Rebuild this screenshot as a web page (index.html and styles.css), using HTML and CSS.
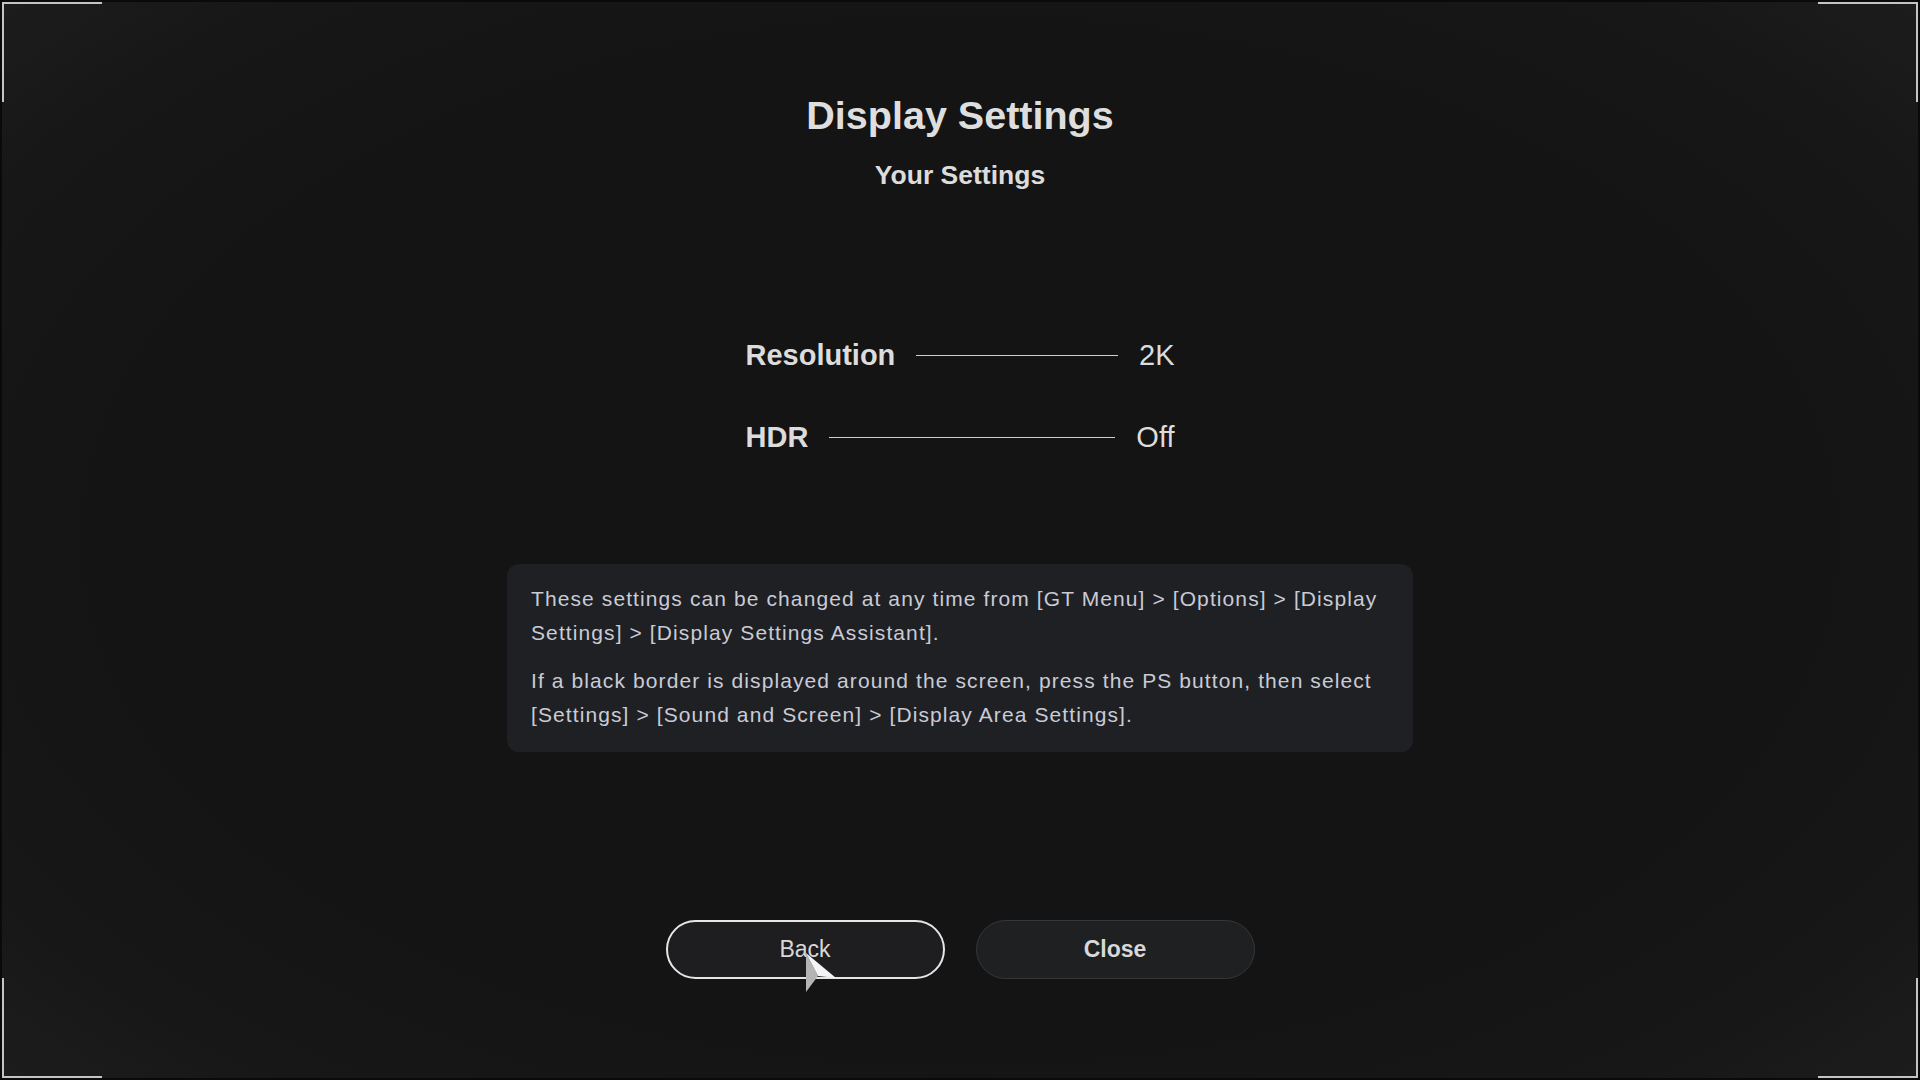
FILE: index.html
```html
<!DOCTYPE html>
<html lang="en">
<head>
<meta charset="utf-8">
<title>Display Settings</title>
<link rel="stylesheet" href="styles.css">
</head>
<body>
<div class="screen">
  <span class="corner tl"></span>
  <span class="corner tr"></span>
  <span class="corner bl"></span>
  <span class="corner br"></span>
  <main class="content">
    <h1 class="title">Display Settings</h1>
    <h2 class="subtitle">Your Settings</h2>
    <div class="settings">
      <div class="row"><span class="label">Resolution</span><span class="rule"></span><span class="value">2K</span></div>
      <div class="row"><span class="label">HDR</span><span class="rule"></span><span class="value">Off</span></div>
    </div>
    <div class="info">
      <p>These settings can be changed at any time from [GT Menu] &gt; [Options] &gt; [Display Settings] &gt; [Display Settings Assistant].</p>
      <p>If a black border is displayed around the screen, press the PS button, then select [Settings] &gt; [Sound and Screen] &gt; [Display Area Settings].</p>
    </div>
    <div class="buttons">
      <button class="btn btn-focus">Back</button>
      <button class="btn btn-close">Close</button>
    </div>
  </main>
  <svg class="cursor" width="32" height="42" viewBox="0 0 32 42">
    <polygon points="1,1 13,24 1,40" fill="#b4b4b4"/>
    <polygon points="1,1 31,26 13,24" fill="#f4f4f4"/>
  </svg>
</div>
</body>
</html>
```
FILE: styles.css
```css
html, body {
  margin: 0;
  padding: 0;
  background: #0c0c0c;
}
.screen {
  position: relative;
  width: 1920px;
  height: 1080px;
  box-sizing: border-box;
  border: 2px solid #0a0a0a;
  background:
    radial-gradient(ellipse 75% 80% at 50% 50%, #141414 55%, #171717 78%, #202020 100%);
  font-family: "Liberation Sans", Arial, sans-serif;
  overflow: hidden;
}
.corner {
  position: absolute;
  width: 98px;
  height: 98px;
  border-color: #c4c4c4;
  border-style: solid;
  border-width: 0;
}
.corner.tl { left: 0; top: 0; border-top-width: 2px; border-left-width: 2px; }
.corner.tr { right: 0; top: 0; border-top-width: 2px; border-right-width: 2px; }
.corner.bl { left: 0; bottom: 0; border-bottom-width: 2px; border-left-width: 2px; }
.corner.br { right: 0; bottom: 0; border-bottom-width: 2px; border-right-width: 2px; }

.content {
  display: flex;
  flex-direction: column;
  align-items: center;
  padding-top: 90px;
}
.title {
  margin: 0;
  font-size: 39.5px;
  line-height: 46px;
  font-weight: 700;
  color: #dedede;
}
.subtitle {
  margin: 21px 0 0;
  font-size: 26.5px;
  line-height: 32px;
  font-weight: 700;
  color: #dcdcdc;
}
.settings {
  margin-top: 144px;
  width: 429px;
  display: flex;
  flex-direction: column;
  gap: 42px;
}
.row {
  display: flex;
  align-items: center;
  gap: 21px;
  height: 40px;
  font-size: 29px;
  color: #dcdcdc;
}
.label { font-weight: 700; }
.rule {
  flex: 1;
  height: 1px;
  background: #cfcfcf;
}
.value { font-weight: 400; }
.info {
  margin-top: 107px;
  width: 906px;
  box-sizing: border-box;
  padding: 18px 22px 20px 24px;
  background: #1f2023;
  border-radius: 12px;
  color: #c9cbd6;
  font-size: 21px;
  line-height: 34px;
  letter-spacing: 1.1px;
}
.info p { margin: 0; }
.info p + p { margin-top: 14px; }
.buttons {
  margin-top: 168px;
  display: flex;
  gap: 31px;
}
.btn {
  width: 279px;
  height: 59px;
  box-sizing: border-box;
  border-radius: 30px;
  background: #1e1e20;
  font-family: "Liberation Sans", Arial, sans-serif;
  font-size: 23px;
  color: #d8d8d8;
  padding: 0;
}
.btn-focus {
  border: 2px solid #e6e6e6;
  font-weight: 400;
}
.btn-close {
  border: 1px solid #36373a;
  background: #1f2022;
  font-weight: 700;
}
.cursor {
  position: absolute;
  left: 803px;
  top: 950px;
}
```
